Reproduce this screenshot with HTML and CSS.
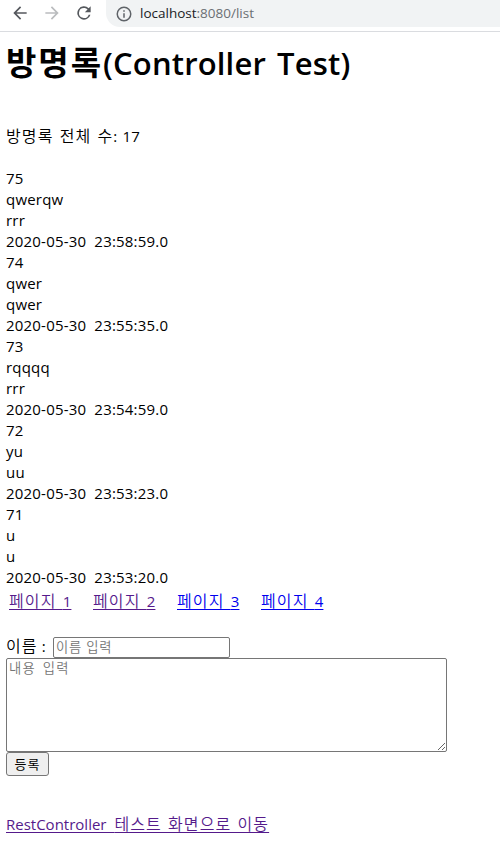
FILE: index.html
```html
<!DOCTYPE html>
<html lang="ko">
<head>
<meta charset="utf-8">
<title>방명록</title>
<link rel="stylesheet" href="styles.css">
</head>
<body>
<header class="toolbar">
  <svg class="nav" viewBox="0 0 24 24"><path d="M20 11H7.8l5.6-5.6L12 4l-8 8 8 8 1.4-1.4L7.8 13H20z"/></svg>
  <svg class="nav off" viewBox="0 0 24 24"><path d="M4 11h12.2l-5.6-5.6L12 4l8 8-8 8-1.4-1.4 5.6-5.6H4z"/></svg>
  <svg class="nav" viewBox="0 0 24 24"><path d="M17.65 6.35A8 8 0 1 0 19.73 14h-2.08A6 6 0 1 1 12 6c1.66 0 3.14.69 4.22 1.78L13 11h7V4z"/></svg>
  <div class="address">
    <svg class="info" viewBox="0 0 24 24"><path d="M11 7h2v2h-2zm0 4h2v6h-2zm1-9a10 10 0 1 0 0 20 10 10 0 0 0 0-20zm0 18a8 8 0 1 1 0-16 8 8 0 0 1 0 16z"/></svg>
    <span class="url">localhost<span class="path">:8080/list</span></span>
  </div>
</header>
<main>
  <h1><span class="ko">방명록</span>(Controller Test)</h1>
  <p class="total"><span class="ko">방명록 전체 수</span>: 17</p>
  <div class="entries">
    <div>75</div><div>qwerqw</div><div>rrr</div><div>2020-05-30 23:58:59.0</div>
    <div>74</div><div>qwer</div><div>qwer</div><div>2020-05-30 23:55:35.0</div>
    <div>73</div><div>rqqqq</div><div>rrr</div><div>2020-05-30 23:54:59.0</div>
    <div>72</div><div>yu</div><div>uu</div><div>2020-05-30 23:53:23.0</div>
    <div>71</div><div>u</div><div>u</div><div>2020-05-30 23:53:20.0</div>
  </div>
  <nav class="pages">
    <a class="visited" href="#"><span class="ko">페이지 </span>1</a>
    <a class="visited" href="#"><span class="ko">페이지 </span>2</a>
    <a href="#"><span class="ko">페이지 </span>3</a>
    <a href="#"><span class="ko">페이지 </span>4</a>
  </nav>
  <form>
    <div class="field"><label for="name"><span class="ko">이름</span> :</label><input id="name" type="text" placeholder="이름 입력"></div>
    <textarea placeholder="내용 입력"></textarea>
    <button type="button">등록</button>
  </form>
  <a class="visited rest" href="#">RestController <span class="ko">테스트 화면으로 이동</span></a>
</main>
</body>
</html>
```
FILE: styles.css
```css
* { box-sizing: border-box; }
body {
  margin: 0;
  background: #fff;
  color: #000;
  font: 400 15px/21px "Open Sans", "Noto Sans CJK KR", sans-serif;
  letter-spacing: 0.2px;
  word-spacing: 4px;
  overflow: hidden;
}
.toolbar {
  display: flex;
  height: 32px;
  padding-left: 10px;
  border-bottom: 1px solid #dadce0;
}
.nav {
  width: 20px;
  height: 20px;
  margin: 3px 12px 0 0;
  fill: #55585d;
}
.off { fill: #babcbe; }
.address {
  flex: 1;
  display: flex;
  align-items: center;
  height: 27px;
  padding-left: 9px;
  background: #f1f3f4;
  border-radius: 0 0 0 14px / 0 0 0 14px;
}
.info { width: 18px; height: 18px; fill: #5f6368; }
.url { margin: -1px 0 0 7px; font-size: 13.5px; letter-spacing: 0; color: #202124; }
.path { color: #6b6f73; }
main { padding-left: 6px; }
.ko {
  font-family: "Noto Sans CJK KR", sans-serif;
  font-size: 16px;
  font-weight: 350;
  letter-spacing: 1.1px;
  word-spacing: 0.6px;
}
h1 {
  height: 43px;
  margin: 8px 0 42px;
  font-size: 31px;
  font-weight: 650;
  line-height: 43px;
  letter-spacing: 0.15px;
  word-spacing: 3px;
  white-space: nowrap;
}
h1 .ko { font-size: 33px; font-weight: 700; letter-spacing: 2px; }
.total { margin: 0 0 22px; height: 21px; word-spacing: 1px; }
.entries div { height: 21px; }
.pages {
  display: flex;
  height: 27px;
  padding: 2px 0 0 3px;
}
.pages a { width: 84px; }
a { color: #0000ee; text-underline-offset: 2px; text-decoration-thickness: 1px; }
.visited { color: #551a8b; }
form {
  display: flex;
  flex-direction: column;
  align-items: flex-start;
  margin-top: 22px;
}
.field { display: flex; height: 21px; }
label { width: 47px; line-height: 17px; word-spacing: 0; white-space: nowrap; }
input, textarea {
  border: 1px solid #767676;
  border-radius: 2px;
  font-family: "Noto Sans CJK KR", sans-serif;
  font-weight: 350;
  outline: 0;
}
input { width: 177px; height: 21px; padding: 0 2px 3px; font-size: 13.3px; letter-spacing: 0.7px; }
textarea { width: 441px; height: 94px; padding: 0 2px; font-size: 13.3px; line-height: 17px; letter-spacing: 1.2px; word-spacing: 2px; }
::placeholder { color: #757575; }
button {
  width: 43px;
  height: 24px;
  padding: 0;
  border: 1px solid #767676;
  border-radius: 3px;
  background: #efefef;
  color: #000;
  font: 400 13px/20px "Noto Sans CJK KR", sans-serif;
  letter-spacing: 1px;
}
.rest { display: inline-block; margin-top: 37px; letter-spacing: 0; white-space: nowrap; }
```
